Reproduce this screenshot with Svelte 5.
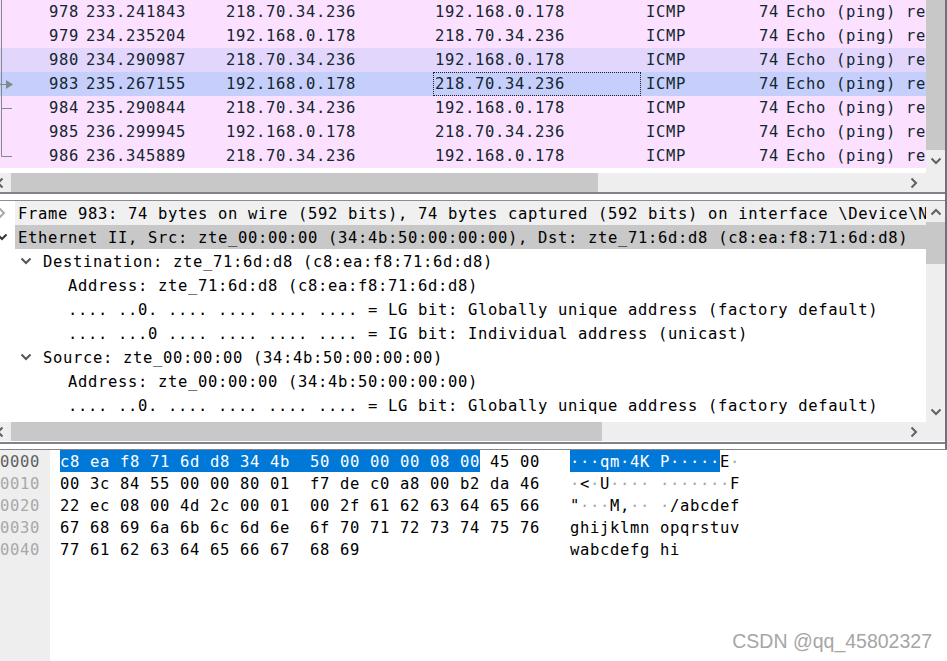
<script>
  const packets = [
    { no: 978, time: '233.241843', src: '218.70.34.236', dst: '192.168.0.178', kind: 'icmp' },
    { no: 979, time: '234.235204', src: '192.168.0.178', dst: '218.70.34.236', kind: 'icmp' },
    { no: 980, time: '234.290987', src: '218.70.34.236', dst: '192.168.0.178', kind: 'related' },
    { no: 983, time: '235.267155', src: '192.168.0.178', dst: '218.70.34.236', kind: 'selected' },
    { no: 984, time: '235.290844', src: '218.70.34.236', dst: '192.168.0.178', kind: 'icmp' },
    { no: 985, time: '236.299945', src: '192.168.0.178', dst: '218.70.34.236', kind: 'icmp' },
    { no: 986, time: '236.345889', src: '218.70.34.236', dst: '192.168.0.178', kind: 'icmp' }
  ];

  const tree = [
    { text: 'Frame 983: 74 bytes on wire (592 bits), 74 bytes captured (592 bits) on interface \\Device\\NPF_{', level: 0, arrow: 'right', cls: 'frame' },
    { text: 'Ethernet II, Src: zte_00:00:00 (34:4b:50:00:00:00), Dst: zte_71:6d:d8 (c8:ea:f8:71:6d:d8)', level: 0, arrow: 'down', cls: 'eth' },
    { text: 'Destination: zte_71:6d:d8 (c8:ea:f8:71:6d:d8)', level: 1, arrow: 'down' },
    { text: 'Address: zte_71:6d:d8 (c8:ea:f8:71:6d:d8)', level: 2 },
    { text: '.... ..0. .... .... .... .... = LG bit: Globally unique address (factory default)', level: 2 },
    { text: '.... ...0 .... .... .... .... = IG bit: Individual address (unicast)', level: 2 },
    { text: 'Source: zte_00:00:00 (34:4b:50:00:00:00)', level: 1, arrow: 'down' },
    { text: 'Address: zte_00:00:00 (34:4b:50:00:00:00)', level: 2 },
    { text: '.... ..0. .... .... .... .... = LG bit: Globally unique address (factory default)', level: 2 }
  ];

  // sel = selected hex bytes, plain pairs otherwise
  const hex = [
    { off: '0000', sel: 'c8 ea f8 71 6d d8 34 4b  50 00 00 00 08 00', rest: ' 45 00', asel: '···qm·4K P·····', arest: 'E·' },
    { off: '0010', sel: '', rest: '00 3c 84 55 00 00 80 01  f7 de c0 a8 00 b2 da 46', asel: '', arest: '·<·U···· ·······F' },
    { off: '0020', sel: '', rest: '22 ec 08 00 4d 2c 00 01  00 2f 61 62 63 64 65 66', asel: '', arest: '"···M,·· ·/abcdef' },
    { off: '0030', sel: '', rest: '67 68 69 6a 6b 6c 6d 6e  6f 70 71 72 73 74 75 76', asel: '', arest: 'ghijklmn opqrstuv' },
    { off: '0040', sel: '', rest: '77 61 62 63 64 65 66 67  68 69', asel: '', arest: 'wabcdefg hi' }
  ];

  const dots = (s) => s.split(/(·+)/).filter(Boolean);
</script>

{#snippet chevron(dir)}
  <svg class="chev {dir}" width="12" height="12" viewBox="0 0 12 12">
    <path d="M1.500 3.500l4.500 4.500 4.500-4.500" fill="none" stroke="currentColor" stroke-width="2" />
  </svg>
{/snippet}

<div class="app">
  <div class="panes">
    <section class="pane list">
      <div class="top">
        <div class="rows">
          {#each packets as p}
            <div class="row {p.kind}">
              <span class="no">{p.no}</span>
              <span>{p.time}</span>
              <span>{p.src}</span>
              <span class="dst">{p.dst}</span>
              <span class="proto"><span>ICMP</span><span>74</span></span>
              <span class="info">Echo (ping) re</span>
            </div>
          {/each}
          <svg class="related-lines" width="16" height="168" viewBox="0 0 16 168">
            <path d="M1.500 0V156.500H12M1.500 108.500H12M0 84.500H6" fill="none" stroke="#808a8c" />
            <path d="M6 80l7 4.500-7 4.500z" fill="#808a8c" />
          </svg>
        </div>
        <div class="vbar">
          <div class="vthumb v1"></div>
          <div class="vend">{@render chevron('down')}</div>
        </div>
      </div>
      <div class="hbar">
        <span class="larrow">{@render chevron('left')}</span>
        <div class="thumb t1"></div>
        <span class="rarrow">{@render chevron('right')}</span>
      </div>
    </section>

    <section class="pane details">
      <div class="top">
        <div class="tree">
          {#each tree as n}
            <div class="node l{n.level} {n.cls ?? ''}">
              {#if n.arrow}<span class="tw">{@render chevron(n.arrow)}</span>{/if}
              <span class="txt">{n.text}</span>
            </div>
          {/each}
        </div>
        <div class="vbar">
          <div class="vend">{@render chevron('up')}</div>
          <div class="vthumb v2"></div>
          <div class="vspace"></div>
          <div class="vend">{@render chevron('down')}</div>
        </div>
      </div>
      <div class="hbar">
        <span class="larrow">{@render chevron('left')}</span>
        <div class="thumb t2"></div>
        <span class="rarrow">{@render chevron('right')}</span>
      </div>
    </section>
  </div>

  <section class="bytes">
    <div class="gutter">
      {#each hex as h, i}<div class="off" class:cur={i === 0}>{h.off}</div>{/each}
    </div>
    <div class="hexcol">
      {#each hex as h}
        <div class="hexrow">{#if h.sel}<span class="sel">{h.sel}</span>{/if}{h.rest}</div>
      {/each}
    </div>
    <div class="asciicol">
      {#each hex as h}
        <div class="hexrow">{#if h.asel}<span class="sel">{h.asel}</span>{/if}{#each dots(h.arest) as part}{#if part[0] === '·'}<span class="dot">{part}</span>{:else}{part}{/if}{/each}</div>
      {/each}
    </div>
  </section>

  <div class="mark">CSDN @qq_45802327</div>
</div>

<style>
  :global(body) {
    margin: 0;
    background: #fff;
  }

  .app {
    position: relative;
    width: 947px;
    height: 661px;
    overflow: hidden;
    background: #fff;
    font-family: "DejaVu Sans Mono", monospace;
    font-size: 15.5px;
    letter-spacing: 0.67px;
    color: #000;
  }

  .panes {
    box-sizing: border-box;
    width: 947px;
    height: 449px;
    border-right: 2px solid #70707a;
  }

  .pane {
    box-sizing: border-box;
    border-bottom: 2px solid #82828c;
  }

  .list {
    height: 194px;
  }

  .details {
    height: 244px;
    margin-top: 6px;
    border-top: 1px solid #8c8c96;
    padding-bottom: 1px;
  }

  .top {
    display: flex;
  }

  .rows {
    position: relative;
    width: 926px;
    height: 173px;
    background: #fff;
  }

  .row {
    display: grid;
    grid-template-columns: 86px 140px 207px 213px 133px 146px;
    height: 24px;
    line-height: 24px;
    overflow: hidden;
    color: #12272e;
    background: #fce0ff;
  }

  .row.related {
    background: #e2d6fc;
  }

  .row.selected {
    background: #c6cffc;
  }

  .no {
    text-align: right;
    padding-right: 7px;
  }

  .dst {
    box-sizing: border-box;
    padding-left: 2px;
    margin-right: 5px;
  }

  .selected .dst {
    outline: 1px dotted #222;
    outline-offset: -1px;
  }

  .proto {
    display: flex;
    justify-content: space-between;
  }

  .info {
    padding-left: 7px;
    overflow: hidden;
    white-space: pre;
  }

  .related-lines {
    position: absolute;
    left: 0;
    top: 0;
  }

  .hbar {
    display: flex;
    align-items: center;
    height: 19px;
    background: #eeeeee;
  }

  .larrow {
    display: flex;
    width: 11px;
    color: #606060;
  }

  .larrow :global(svg) {
    margin-left: -6px;
  }

  .thumb {
    height: 19px;
    background: #c8c8c8;
  }

  .t1 {
    width: 587px;
  }

  .t2 {
    width: 591px;
  }

  .rarrow {
    display: flex;
    margin-left: auto;
    margin-right: 25px;
    color: #606060;
  }

  .vbar {
    flex: none;
    width: 19px;
    display: flex;
    flex-direction: column;
    background: #eeeeee;
    color: #606060;
  }

  .vthumb {
    background: #c8c8c8;
  }

  .v1 {
    height: 150px;
  }

  .v2 {
    height: 42px;
  }

  .vspace {
    flex: 1;
  }

  .vend {
    flex: none;
    height: 21px;
    display: flex;
    align-items: center;
    justify-content: center;
  }

  .chev.right {
    transform: rotate(-90deg);
  }

  .chev.left {
    transform: rotate(90deg);
  }

  .chev.up {
    transform: rotate(180deg);
  }

  .tree {
    width: 926px;
    height: 221px;
    overflow: hidden;
  }

  .node {
    display: flex;
    align-items: center;
    height: 24px;
    overflow: hidden;
  }

  .l1 {
    padding-left: 20px;
  }

  .l2 {
    padding-left: 68px;
  }

  .txt {
    height: 24px;
    line-height: 26px;
    white-space: pre;
  }

  .tw {
    display: flex;
    flex: none;
    color: #555;
  }

  .l0 .tw {
    width: 15px;
  }

  .l0 .tw :global(svg) {
    margin-left: -4px;
  }

  .l1 .tw {
    width: 23px;
  }

  .l0 .txt {
    flex: 1;
    padding-left: 3px;
  }

  .frame .txt {
    background: #f0f0f0;
  }

  .frame .tw {
    color: #aaa;
  }

  .eth .txt {
    background: #c8c8c8;
  }

  .eth .tw {
    color: #333;
  }

  .bytes {
    display: flex;
    height: 211px;
    border-top: 1px solid #82828c;
  }

  .gutter {
    width: 50px;
    background: #eeeeee;
    color: #a8a8a8;
  }

  .off {
    height: 22px;
    line-height: 24px;
  }

  .off.cur {
    color: #606060;
  }

  .hexcol {
    width: 510px;
    margin-left: 10px;
  }

  .hexrow {
    height: 22px;
    line-height: 24px;
    white-space: pre;
  }

  .sel {
    display: inline-block;
    height: 22px;
    background: #0078d7;
    color: #fff;
  }

  .dot {
    color: #a8a8a8;
  }

  .mark {
    position: absolute;
    right: 15px;
    bottom: 8px;
    font-family: "Liberation Sans", sans-serif;
    font-size: 19.5px;
    letter-spacing: 0;
    color: #a6a6a6;
  }
</style>
